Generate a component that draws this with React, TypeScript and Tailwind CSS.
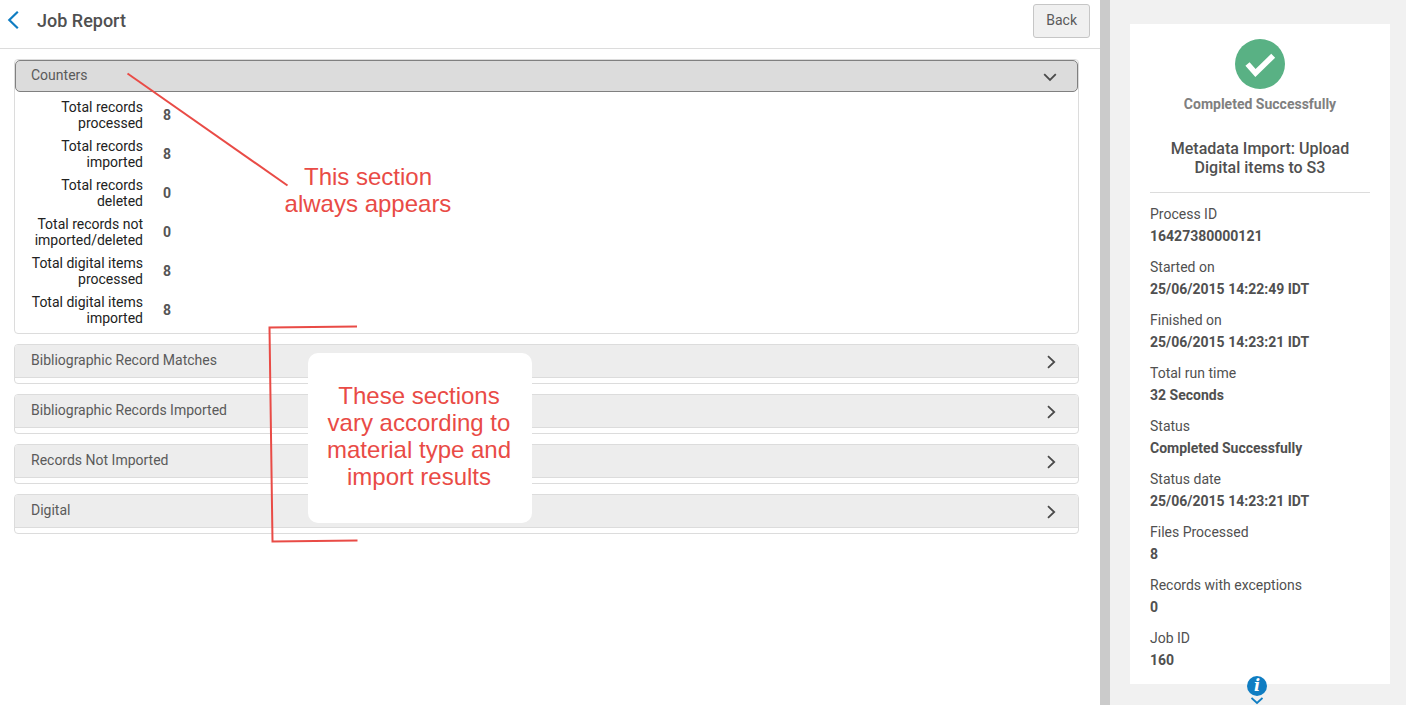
import { useState } from "react";

const counters = [
  { label: "Total records processed", value: 8 },
  { label: "Total records imported", value: 8 },
  { label: "Total records deleted", value: 0 },
  { label: "Total records not imported/deleted", value: 0 },
  { label: "Total digital items processed", value: 8 },
  { label: "Total digital items imported", value: 8 },
];

const sections = [
  "Bibliographic Record Matches",
  "Bibliographic Records Imported",
  "Records Not Imported",
  "Digital",
];

const details = [
  { label: "Process ID", value: "16427380000121" },
  { label: "Started on", value: "25/06/2015 14:22:49 IDT" },
  { label: "Finished on", value: "25/06/2015 14:23:21 IDT" },
  { label: "Total run time", value: "32 Seconds" },
  { label: "Status", value: "Completed Successfully" },
  { label: "Status date", value: "25/06/2015 14:23:21 IDT" },
  { label: "Files Processed", value: "8" },
  { label: "Records with exceptions", value: "0" },
  { label: "Job ID", value: "160" },
];

const Chevron = ({ open }: { open: boolean }) => (
  <svg
    width="14"
    height="14"
    viewBox="0 0 14 14"
    fill="none"
    stroke="#4a4a4a"
    strokeWidth="1.8"
    aria-hidden="true"
  >
    {open ? (
      <path d="M1.200 4.200L7 10l5.800-5.800" />
    ) : (
      <path d="M4 1.200L10.200 7L4 12.800" />
    )}
  </svg>
);

const CountersPanel = () => {
  const [open, setOpen] = useState(true);

  return (
    <section className="rounded border border-[#dcdcdc]">
      <button
        type="button"
        aria-expanded={open}
        onClick={() => setOpen(!open)}
        className="flex h-8 w-full items-center justify-between rounded-[5px] border border-[#808080] bg-[#dcdcdc] pl-[15px] pr-5 text-left text-[#5a5a5a]"
      >
        <span className="pb-0.5">Counters</span>
        <span className="pt-0.5">
          <Chevron open={open} />
        </span>
      </button>
      {open && (
        <dl className="flex flex-col gap-[7px] px-4 py-[7px] leading-4">
          {counters.map((counter) => (
            <div key={counter.label} className="flex items-center gap-5">
              <dt className="w-28 text-right text-[#222]">{counter.label}</dt>
              <dd className="font-bold text-[#555]">{counter.value}</dd>
            </div>
          ))}
        </dl>
      )}
    </section>
  );
};

const CollapsedPanel = ({ title }: { title: string }) => {
  const [open, setOpen] = useState(false);

  return (
    <section className="overflow-hidden rounded border border-[#dcdcdc] pb-[5px]">
      <button
        type="button"
        aria-expanded={open}
        onClick={() => setOpen(!open)}
        className="flex h-[33px] w-full items-center justify-between border-b border-[#dcdcdc] bg-[#ededed] pl-4 pr-5 text-left text-[#5a5a5a]"
      >
        <span className="pb-0.5">{title}</span>
        <span className="pt-0.5">
          <Chevron open={open} />
        </span>
      </button>
    </section>
  );
};

// Red notes drawn over the report
const Annotations = () => (
  <div className="pointer-events-none absolute inset-0 text-center font-['Liberation_Sans',sans-serif] text-2xl leading-[27px] text-[#e94b46]">
    <svg
      className="absolute left-0 top-0"
      width="540"
      height="560"
      viewBox="0 0 540 560"
      fill="none"
      stroke="#e94b46"
      strokeWidth="2"
      aria-hidden="true"
    >
      <path d="M127.500 73.500L287.500 185.500" />
      <path d="M357 326.500L269.500 327.500L272.500 541.500L357.500 540.500" />
    </svg>
    <p className="absolute left-[278px] top-[163px] w-[180px]">
      This section always appears
    </p>
    <div className="absolute left-[308px] top-[353px] flex h-[170px] w-56 items-center justify-center rounded-[10px] bg-white pb-1 pr-0.5">
      <p className="w-[200px]">
        These sections vary according to material type and import results
      </p>
    </div>
  </div>
);

const SummarySidebar = () => (
  <aside className="relative w-[306px] shrink-0 border-l-10 border-[#cbcbcb] bg-[#f1f1f1] pb-5 pl-5 pr-4 pt-6">
    <div className="bg-white px-5 pb-[13px] pt-[15px]">
      <div className="border-b border-[#dcdcdc] pb-[15px] text-center">
        <svg
          className="mx-auto"
          width="50"
          height="50"
          viewBox="0 0 50 50"
          aria-hidden="true"
        >
          <circle cx="25" cy="25" r="25" fill="#59b184" />
          <path
            d="M12.500 25L20.500 34L38.200 16.800"
            fill="none"
            stroke="#fff"
            strokeWidth="5.600"
          />
        </svg>
        <p className="pt-[5px] font-bold leading-5 text-[#808080]">
          Completed Successfully
        </p>
        <h2 className="px-4 pt-[25px] text-base font-medium leading-[19px] text-[#505050]">
          Metadata Import: Upload Digital items to S3
        </h2>
      </div>
      <dl className="flex flex-col gap-[9px] pt-2.5 leading-[22px] text-[#505050]">
        {details.map((detail) => (
          <div key={detail.label}>
            <dt>{detail.label}</dt>
            <dd className="font-bold">{detail.value}</dd>
          </div>
        ))}
      </dl>
    </div>

    <button
      type="button"
      aria-label="More information"
      className="absolute bottom-0 left-[137px] flex flex-col items-center"
    >
      <span className="flex size-5 items-center justify-center rounded-full bg-[#0f7dc2] font-['DejaVu_Serif',serif] text-base font-bold italic leading-5 text-white">
        i
      </span>
      <svg
        width="12"
        height="9"
        viewBox="0 0 12 9"
        fill="none"
        stroke="#0f7dc2"
        strokeWidth="1.8"
        aria-hidden="true"
      >
        <path d="M0.500 2L6 7L11.500 2" />
      </svg>
    </button>
  </aside>
);

const App = () => {
  return (
    <div className="flex min-h-screen bg-white font-[Roboto,sans-serif] text-sm">
      <main className="relative min-w-0 flex-1">
        <header className="flex h-[49px] items-start justify-between border-b border-[#dcdcdc] pl-[7px] pr-2.5 pt-1">
          <div className="flex h-[34px] items-center gap-[18px]">
            <a href="#" aria-label="Go back">
              <svg
                width="12"
                height="20"
                viewBox="0 0 12 20"
                fill="none"
                stroke="#0f7dc2"
                strokeWidth="2.200"
                aria-hidden="true"
              >
                <path d="M10.800 0.800L2.300 9L10.800 17.200" />
              </svg>
            </a>
            <h1 className="text-lg font-medium text-[#505050]">Job Report</h1>
          </div>
          <button
            type="button"
            className="h-[34px] rounded-[3px] border border-[#c6c6c6] bg-[#f0f0f0] px-3 pb-0.5 text-[#5a5a5a]"
          >
            Back
          </button>
        </header>

        <div className="flex flex-col gap-2.5 pb-6 pl-3.5 pr-[21px] pt-2.5">
          <CountersPanel />
          {sections.map((title) => (
            <CollapsedPanel key={title} title={title} />
          ))}
        </div>

        <Annotations />
      </main>

      <SummarySidebar />
    </div>
  );
};

export default App;
